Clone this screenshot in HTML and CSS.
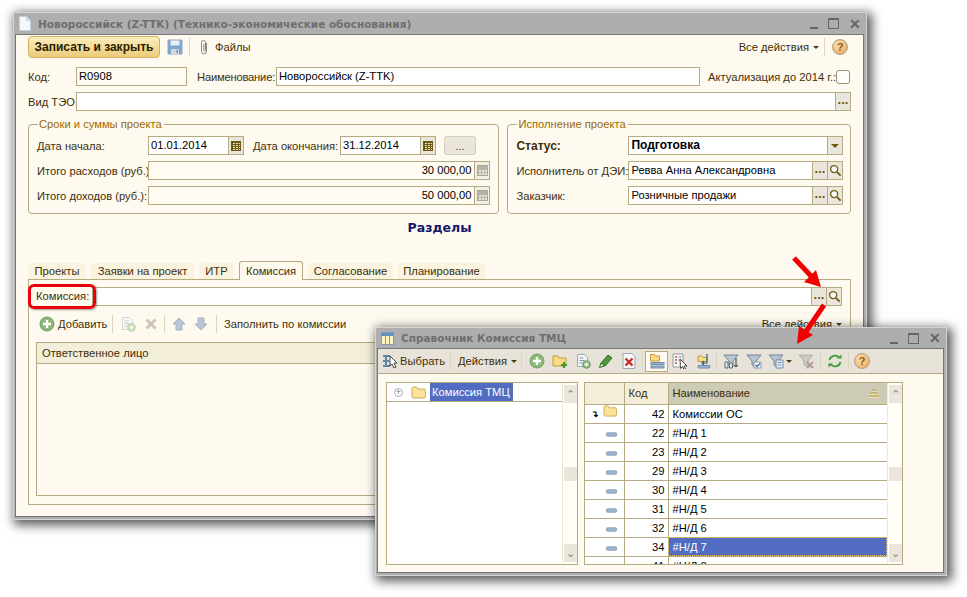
FILE: index.html
```html
<!DOCTYPE html>
<html lang="ru">
    <head>
        <meta charset="UTF-8" />
        <title>Новороссийск (Z-TTK)</title>
        <link rel="stylesheet" href="styles.css">
    </head>
    <body>
        <svg class="defs" width="0" height="0">
            <symbol id="i-search" viewBox="0 0 14 14">
                <circle cx="5.5" cy="5.5" r="3.8" fill="#fff" stroke="#75601c" stroke-width="1.5"/>
                <path d="M8.5 8.5l4 4" stroke="#75601c" stroke-width="2.2"/>
            </symbol>
            <symbol id="i-add" viewBox="0 0 16 16">
                <circle cx="8" cy="8" r="7" fill="#8cb878" stroke="#6f9a62"/>
                <path d="M8 4v8M4 8h8" stroke="#fff" stroke-width="2.4"/>
            </symbol>
            <symbol id="i-folder" viewBox="0 0 15 13">
                <path d="M1 2.5q0-1.500 1.500-1.500h3l1.500 2h6q1.500 0 1.500 1.500v6q0 1.500-1.500 1.500h-10.500q-1.500 0-1.500-1.500z" fill="#fbe49a" stroke="#c9a95c"/>
            </symbol>
            <symbol id="i-page-add" viewBox="0 0 16 16">
                <path d="M2.500 1.500h7l3 3v9h-10z" fill="#f4f6f8" stroke="#9fa9b5"/>
                <path d="M4.500 5h4M4.500 7.500h5M4.500 10h3" stroke="#7c97b8"/>
                <circle cx="11.500" cy="11.500" r="3.800" fill="#8cb878" stroke="#6f9a62"/>
                <path d="M11.500 9.500v4M9.500 11.500h4" stroke="#fff" stroke-width="1.400"/>
            </symbol>
            <symbol id="i-filter" viewBox="0 0 16 16">
                <path d="M1 2h14l-5 6v6l-4-2v-4z" fill="#b9c6d2" stroke="#74858f"/>
            </symbol>
            <symbol id="i-dash" viewBox="0 0 16 6">
                <rect x="0.500" y="0.500" width="15" height="5" rx="1.500" fill="#9db8d2" stroke="#6e8ba8"/>
            </symbol>
        </svg>

        <div class="window main-window">
            <div class="titlebar">
                <svg class="title-icon" width="12" height="15" viewBox="0 0 12 15"><path d="M.5.500h7l4 4v10h-11z" fill="#f4f8fc" stroke="#c4d2e0"/><path d="M7.500.500v4h4" fill="#d5e0ec" stroke="#c4d2e0"/></svg>
                <span class="title-text">Новороссийск (Z-TTK) (Технико-экономические обоснования)</span>
                <span class="controls"><i class="ctl-min"></i><i class="ctl-max"></i><i class="ctl-close">✕</i></span>
            </div>
            <div class="window-body main-body">
                <div class="toolbar main-toolbar">
                    <button class="primary">Записать и закрыть</button>
                    <svg class="save-icon" width="16" height="16" viewBox="0 0 16 16"><path d="M1 1h14v14h-14z" fill="#7ea6cb" stroke="#8fa9c2"/><path d="M3.500 1.500h9v5h-9z" fill="#e6eef6"/><path d="M4 10h8v5h-8z" fill="#cfd9e4"/><path d="M9.500 11h1.500v3h-1.500z" fill="#5f8fbd"/></svg>
                    <span class="sep save-sep"></span>
                    <svg class="clip-icon" width="8" height="16" viewBox="0 0 8 16"><path d="M6.500 4v8.500a2.500 2.500 0 0 1-5 0v-9a2 2 0 0 1 4 0v8a.8.8 0 0 1-1.600 0v-7" fill="none" stroke="#8b8b82" stroke-width="1"/></svg>
                    <span class="files">Файлы</span>
                    <span class="actions">Все действия<i class="caret"></i></span>
                    <span class="sep"></span>
                    <span class="help">?</span>
                </div>

                <div class="row row-first">
                    <label class="lbl w-48">Код:</label>
                    <div class="field readonly w-111"><span class="val">R0908</span></div>
                    <label class="lbl name-lbl">Наименование:</label>
                    <div class="field name-field"><span class="val">Новороссийск (Z-TTK)</span></div>
                    <label class="lbl actual-lbl">Актуализация до 2014 г.:</label>
                    <span class="check"></span>
                </div>
                <div class="row row-kind">
                    <label class="lbl w-48">Вид ТЭО:</label>
                    <div class="field grow"><span class="val"></span><b class="btn dots">...</b></div>
                </div>

                <div class="groups">
                    <fieldset class="group group-left">
                        <legend>Сроки и суммы проекта</legend>
                        <div class="group-row">
                            <label class="lbl w-111">Дата начала:</label>
                            <div class="field w-96"><span class="val">01.01.2014</span><b class="btn cal"><i></i></b></div>
                            <label class="lbl end-lbl">Дата окончания:</label>
                            <div class="field w-96"><span class="val">31.12.2014</span><b class="btn cal"><i></i></b></div>
                            <button class="plain">...</button>
                        </div>
                        <div class="group-row">
                            <label class="lbl w-111">Итого расходов (руб.):</label>
                            <div class="field readonly grow"><span class="val right">30 000,00</span><b class="btn calc"><i></i></b></div>
                        </div>
                        <div class="group-row">
                            <label class="lbl w-111">Итого доходов (руб.):</label>
                            <div class="field readonly grow"><span class="val right">50 000,00</span><b class="btn calc"><i></i></b></div>
                        </div>
                    </fieldset>
                    <fieldset class="group group-right">
                        <legend>Исполнение проекта</legend>
                        <div class="group-row">
                            <label class="lbl w-112 strong">Статус:</label>
                            <div class="field grow"><span class="val strong-val">Подготовка</span><b class="btn drop"><i class="caret big"></i></b></div>
                        </div>
                        <div class="group-row">
                            <label class="lbl w-112">Исполнитель от ДЭИ:</label>
                            <div class="field grow"><span class="val">Ревва Анна Александровна</span><b class="btn dots">...</b><b class="btn"><svg width="13" height="13"><use href="#i-search"/></svg></b></div>
                        </div>
                        <div class="group-row">
                            <label class="lbl w-112">Заказчик:</label>
                            <div class="field grow"><span class="val">Розничные продажи</span><b class="btn dots">...</b><b class="btn"><svg width="13" height="13"><use href="#i-search"/></svg></b></div>
                        </div>
                    </fieldset>
                </div>

                <div class="section-title">Разделы</div>

                <div class="tabs">
                    <span class="tab t-1">Проекты</span>
                    <span class="tab t-2">Заявки на проект</span>
                    <span class="tab t-3">ИТР</span>
                    <span class="tab t-4 active">Комиссия</span>
                    <span class="tab t-5">Согласование</span>
                    <span class="tab t-6">Планирование</span>
                </div>
                <div class="tab-panel">
                    <div class="panel-field">
                        <label class="lbl marked">Комиссия:</label>
                        <div class="field grow"><span class="val"></span><b class="btn dots">...</b><b class="btn"><svg width="13" height="13"><use href="#i-search"/></svg></b></div>
                    </div>
                    <div class="toolbar panel-toolbar">
                        <svg class="add-icon" width="16" height="16"><use href="#i-add"/></svg>
                        <span class="add-text">Добавить</span>
                        <span class="sep"></span>
                        <svg class="faded copy-icon" width="16" height="16"><use href="#i-page-add"/></svg>
                        <svg class="del-icon" width="12" height="12" viewBox="0 0 12 12"><path d="M1.500 1.500l9 9M10.500 1.500l-9 9" stroke="#d2c3b8" stroke-width="3"/></svg>
                        <span class="sep"></span>
                        <svg class="arrow-icon up" width="14" height="14" viewBox="0 0 14 14"><path d="M7 1l6 6h-3v6h-6v-6h-3z" fill="#b9c7d4" stroke="#a3b2c0"/></svg>
                        <svg class="arrow-icon down" width="14" height="14" viewBox="0 0 14 14"><path d="M7 13l6-6h-3v-6h-6v6h-3z" fill="#b9c7d4" stroke="#a3b2c0"/></svg>
                        <span class="sep"></span>
                        <span class="fill-text">Заполнить по комиссии</span>
                        <span class="actions">Все действия<i class="caret"></i></span>
                    </div>
                    <div class="plain-table">
                        <div class="plain-head">Ответственное лицо</div>
                    </div>
                </div>
            </div>
        </div>

        <div class="window ref-window">
            <div class="titlebar">
                <svg class="title-icon" width="13" height="13" viewBox="0 0 13 13"><path d="M.5.500h12v12h-12z" fill="#fdf3c0" stroke="#7f9cb8"/><path d="M.5 2.500h12" stroke="#5f8fbd" stroke-width="3"/><path d="M4.500 1v11M8.500 1v11" stroke="#7f9cb8"/></svg>
                <span class="title-text">Справочник Комиссия ТМЦ</span>
                <span class="controls"><i class="ctl-min"></i><i class="ctl-max"></i><i class="ctl-close">✕</i></span>
            </div>
            <div class="window-body">
                <div class="toolbar ref-toolbar">
                    <svg class="pick-icon" width="16" height="16" viewBox="0 0 16 16"><path d="M1 3h7M1 8h6M1 13h7M4 3v10" stroke="#5f86a8" stroke-width="2" fill="none"/><path d="M8 3l7 7h-3l2 4-2 1-2-4-2 2z" fill="#fff" stroke="#444"/></svg>
                    <span class="pick-text">Выбрать</span>
                    <span class="sep"></span>
                    <span class="acts-text">Действия<i class="caret"></i></span>
                    <span class="sep before-tools"></span>
                    <span class="tool"><svg width="16" height="16"><use href="#i-add"/></svg></span>
                    <span class="tool"><svg width="16" height="16" viewBox="0 0 16 16"><path d="M1 3h5l1 2h7v8h-13z" fill="#fbdc80" stroke="#c49a3c"/><path d="M12 9v6M9 12h6" stroke="#3c9a2c" stroke-width="2"/></svg></span>
                    <span class="tool"><svg width="16" height="16"><use href="#i-page-add"/></svg></span>
                    <span class="tool"><svg width="16" height="16" viewBox="0 0 16 16"><path d="M3 10l7-8 4 3-7 8z" fill="#4f9a3a" stroke="#2f7024"/><path d="M3 10l-1.500 4.500 5-1.500z" fill="#e8e3d8" stroke="#2f7024"/></svg></span>
                    <span class="tool"><svg width="14" height="16" viewBox="0 0 14 16"><path d="M1 .5h9l3 3v12h-12z" fill="#f4f6f8" stroke="#9fa9b5"/><path d="M3.500 5.500l7 7M10.500 5.500l-7 7" stroke="#c8281e" stroke-width="2.200"/></svg></span>
                    <span class="sep tight"></span>
                    <span class="tool toggled"><svg width="16" height="16" viewBox="0 0 16 16"><path d="M1.500 1.500h4l1 1.500h4v5h-9z" fill="#fbdc80" stroke="#c49a3c"/><rect x="2" y="9.500" width="13" height="2" fill="#9db8d2" stroke="#6e8ba8"/><rect x="2" y="13" width="13" height="2" fill="#9db8d2" stroke="#6e8ba8"/></svg></span>
                    <span class="tool"><svg width="16" height="16" viewBox="0 0 16 16"><path d="M1 1h10v13h-10z" fill="#f4f6f8" stroke="#8f9aa5"/><path d="M3 4h2M3 7h2M3 10h2" stroke="#c8503c" stroke-width="1.400"/><path d="M6.500 4h3M6.500 7h2" stroke="#5f86a8"/><path d="M8 6l7 7h-3l1.500 3-1.500.500-1.500-3-2 2z" fill="#fff" stroke="#444"/></svg></span>
                    <span class="tool"><svg width="16" height="16" viewBox="0 0 16 16"><path d="M3 3h4l1 1.500h4v4h-9z" fill="#fbdc80" stroke="#c49a3c"/><path d="M12 1v9h-5M9 8l-2 2 2 2" fill="none" stroke="#35607f" stroke-width="1.200"/><rect x="3" y="12.500" width="12" height="2.500" rx="1" fill="#9db8d2" stroke="#6e8ba8"/></svg></span>
                    <span class="sep tight"></span>
                    <span class="tool"><svg width="16" height="16" viewBox="0 0 16 16"><use href="#i-filter"/><path d="M2 9h3v6h-3zM6.500 10h3v5h-3z" fill="#dfe6ec" stroke="#56707f"/><path d="M13 5v9M11 12l2 2 2-2" fill="none" stroke="#333"/></svg></span>
                    <span class="tool"><svg width="16" height="16" viewBox="0 0 16 16"><use href="#i-filter"/><path d="M8 9h7v6h-7z" fill="#f4f6f8" stroke="#8f9aa5"/><path d="M9.500 12l1.500 1.500 3-3" fill="none" stroke="#3a78b8" stroke-width="1.400"/></svg></span>
                    <span class="tool filter-drop"><svg width="16" height="16" viewBox="0 0 16 16"><use href="#i-filter"/><path d="M8 7h7v8h-7z" fill="#e8eef4" stroke="#6e8ba8"/><path d="M9.500 9.500h4M9.500 12h4" stroke="#6e8ba8"/></svg><i class="caret"></i></span>
                    <span class="tool faded-x"><svg width="16" height="16" viewBox="0 0 16 16"><path d="M1 2h14l-5 6v6l-4-2v-4z" fill="#c8c8c4" stroke="#b0b0ac"/><path d="M9 9l6 6M15 9l-6 6" stroke="#b59a94" stroke-width="2"/></svg></span>
                    <span class="sep tight"></span>
                    <span class="tool"><svg width="16" height="16" viewBox="0 0 16 16"><path d="M2.500 7a5.500 5.500 0 0 1 9.500-2.500M13.500 9a5.500 5.500 0 0 1-9.500 2.500" fill="none" stroke="#3f9a3a" stroke-width="1.800"/><path d="M10 5.500h4.500v-4zM6 10.500h-4.500v4z" fill="#3f9a3a"/></svg></span>
                    <span class="sep tight"></span>
                    <span class="help help-ref">?</span>
                </div>
                <div class="ref-content">
                    <div class="tree">
                        <div class="tree-main">
                            <div class="tree-row">
                                <span class="expander">+</span>
                                <svg class="tree-folder" width="15" height="13"><use href="#i-folder"/></svg>
                                <span class="tree-sel">Комиссия ТМЦ</span>
                            </div>
                        </div>
                        <div class="scrollbar"><i class="sb-btn">⌃</i><i class="sb-thumb"></i><i class="sb-btn">⌄</i></div>
                    </div>
                    <div class="list">
                        <div class="list-main">
                            <table>
                                <thead>
                                    <tr><th class="c-icon"></th><th class="c-code">Код</th><th class="c-name">Наименование<i class="sort"></i></th></tr>
                                </thead>
                                <tbody>
                                    <tr><td class="c-icon"><span class="drill">↴</span><svg width="14" height="12"><use href="#i-folder"/></svg></td><td class="c-code">42</td><td>Комиссии ОС</td></tr>
                                    <tr><td class="c-icon"><svg width="11" height="5"><use href="#i-dash"/></svg></td><td class="c-code">22</td><td>#Н/Д 1</td></tr>
                                    <tr><td class="c-icon"><svg width="11" height="5"><use href="#i-dash"/></svg></td><td class="c-code">23</td><td>#Н/Д 2</td></tr>
                                    <tr><td class="c-icon"><svg width="11" height="5"><use href="#i-dash"/></svg></td><td class="c-code">29</td><td>#Н/Д 3</td></tr>
                                    <tr><td class="c-icon"><svg width="11" height="5"><use href="#i-dash"/></svg></td><td class="c-code">30</td><td>#Н/Д 4</td></tr>
                                    <tr><td class="c-icon"><svg width="11" height="5"><use href="#i-dash"/></svg></td><td class="c-code">31</td><td>#Н/Д 5</td></tr>
                                    <tr><td class="c-icon"><svg width="11" height="5"><use href="#i-dash"/></svg></td><td class="c-code">32</td><td>#Н/Д 6</td></tr>
                                    <tr><td class="c-icon"><svg width="11" height="5"><use href="#i-dash"/></svg></td><td class="c-code">34</td><td class="selected">#Н/Д 7</td></tr>
                                    <tr><td class="c-icon"><svg width="11" height="5"><use href="#i-dash"/></svg></td><td class="c-code">41</td><td>#Н/Д 8</td></tr>
                                </tbody>
                            </table>
                        </div>
                        <div class="scrollbar"><i class="sb-btn">⌃</i><i class="sb-thumb"></i><i class="sb-btn">⌄</i></div>
                    </div>
                </div>
            </div>
        </div>

        <svg class="red-arrows" width="967" height="597" viewBox="0 0 967 597">
            <path d="M794 258l18 19" stroke="#f00000" stroke-width="5"/>
            <path d="M821 287l-17-5 12-12z" fill="#f00000"/>
            <path d="M824 305l-19 28" stroke="#f00000" stroke-width="5"/>
            <path d="M797 344l2-18 14 9z" fill="#f00000"/>
        </svg>
    </body>
</html>
```

FILE: styles.css
```css
* {
    box-sizing: border-box;
}
body {
    margin: 0;
    width: 967px;
    height: 597px;
    position: relative;
    overflow: hidden;
    background: white;
    color: #3d2f08;
    font-family: "Liberation Sans", Arial, sans-serif;
    font-size: 11.2px;
}
i {
    font-style: normal;
}
.defs {
    position: absolute;
}

/* windows */
.window {
    position: absolute;
    background: #aeaeae;
    border: 1px solid #d4d4d4;
    box-shadow: 3px 3px 10px 2px rgba(0, 0, 0, 0.65);
    display: flex;
    flex-direction: column;
}
.main-window {
    left: 13px;
    top: 12px;
    width: 854px;
    height: 508px;
}
.ref-window {
    left: 375px;
    top: 327px;
    width: 572px;
    height: 249px;
}
.titlebar {
    height: 21px;
    flex: none;
    display: flex;
    align-items: center;
    padding-left: 5px;
    color: #6e6e6e;
}
.ref-window .titlebar {
    height: 20px;
}
.title-text {
    margin-left: 7px;
    font-family: "DejaVu Sans", sans-serif;
    font-weight: bold;
    font-size: 10.5px;
}
.controls {
    margin-left: auto;
    display: flex;
    align-items: center;
    gap: 10px;
    padding-right: 6px;
}
.ctl-min {
    width: 8px;
    height: 2px;
    margin-top: 9px;
    background: #666;
}
.ctl-max {
    width: 11px;
    height: 11px;
    border: 1px solid #666;
    border-top-width: 2px;
}
.ctl-close {
    width: 11px;
    line-height: 12px;
    font-size: 14px;
    font-weight: bold;
    color: #666;
    text-align: center;
}
.window-body {
    flex: 1;
    margin: 0 2px 2px 1px;
    background: #fffaf0;
    border: 1px solid #777;
    min-height: 0;
}
.main-body {
    padding: 0 12px;
}

/* toolbars */
.toolbar {
    display: flex;
    align-items: center;
}
.main-toolbar {
    height: 22px;
    margin-top: 1px;
}
button.primary {
    width: 132px;
    height: 22px;
    padding: 0;
    border: 1px solid #d6b060;
    border-radius: 4px;
    background: linear-gradient(#fdeebc, #eccb7a);
    color: #2c2000;
    font-family: "Liberation Sans", sans-serif;
    font-weight: bold;
    font-size: 12px;
}
.save-icon {
    margin-left: 7px;
}
.sep {
    width: 1px;
    height: 18px;
    background: #dcd6c0;
    flex: none;
}
.save-sep {
    margin-left: 6px;
}
.clip-icon {
    margin-left: 10px;
}
.files {
    margin-left: 7px;
}
.actions {
    margin-left: auto;
    margin-right: 5px;
    white-space: nowrap;
}
.caret {
    display: inline-block;
    width: 0;
    height: 0;
    margin-left: 4px;
    vertical-align: 2px;
    border: 3px solid transparent;
    border-top: 3px solid #4a3c10;
    border-bottom: 0;
}
.help {
    width: 16px;
    height: 16px;
    margin: 0 3px 0 7px;
    border-radius: 50%;
    border: 1px solid #a8a08c;
    background: radial-gradient(circle at 40% 35%, #fde2b4, #eda04a);
    color: #8a5a10;
    font-weight: bold;
    font-size: 11px;
    line-height: 14px;
    text-align: center;
    flex: none;
}

/* form rows */
.row {
    display: flex;
    align-items: center;
    height: 19px;
}
.row-first {
    margin-top: 9px;
}
.row-kind {
    margin-top: 6px;
}
.lbl {
    flex: none;
    white-space: nowrap;
}
.w-48 {
    width: 48px;
}
.w-111 {
    width: 111px;
}
.w-112 {
    width: 112px;
}
.w-96 {
    width: 96px;
}
.grow {
    flex: 1;
}
.field {
    height: 19px;
    border: 1px solid #b5aa80;
    background: white;
    display: flex;
    color: black;
    flex-shrink: 0;
}
.field.grow {
    flex: 1;
    min-width: 0;
}
.field.readonly {
    background: #fffcf4;
}
.val {
    flex: 1;
    padding-left: 2px;
    line-height: 17px;
    white-space: nowrap;
}
.val.right {
    text-align: right;
    padding-right: 3px;
}
.strong-val {
    font-weight: bold;
    font-size: 12px;
}
.name-lbl {
    margin-left: 10px;
    width: 79px;
    letter-spacing: -0.2px;
}
.name-field {
    width: 424px;
}
.actual-lbl {
    margin-left: 8px;
    width: 128px;
}
.check {
    width: 14px;
    height: 14px;
    border: 1px solid #9a9070;
    border-radius: 3px;
    background: white;
}
.btn {
    flex: none;
    width: 15px;
    border-left: 1px solid #b5aa80;
    background: #ebe6dc;
    display: flex;
    align-items: center;
    justify-content: center;
    font-weight: bold;
    color: #6b5a14;
}
.dots {
    font-size: 13px;
    line-height: 20px;
    align-items: flex-end;
    overflow: hidden;
}
.cal i {
    width: 10px;
    height: 10px;
    border: 1px solid #6b5a14;
    background:
        repeating-linear-gradient(90deg, #6b5a14 0 1px, transparent 1px 3px),
        repeating-linear-gradient(#6b5a14 0 1px, #f3e6b0 1px 2px);
}
.calc {
    background: #f3efe2;
}
.calc i {
    width: 11px;
    height: 11px;
    border: 1px solid #a8a898;
    background:
        linear-gradient(#b5b5a8 0 3px, transparent 3px),
        repeating-linear-gradient(90deg, #b5b5a8 0 1px, transparent 1px 3px),
        repeating-linear-gradient(#b5b5a8 0 1px, #e8e8dc 1px 3px);
}
.drop .big {
    margin-left: 0;
    vertical-align: 0;
    border-width: 4px 4px 0;
    border-top-color: #6b5a14;
}

/* groups */
.groups {
    display: flex;
    gap: 8px;
    margin-top: 6px;
}
.group {
    margin: 0;
    min-width: 0;
    height: 97px;
    padding: 5px 7px 8px 8px;
    border: 1px solid #b5aa80;
    border-radius: 4px;
    display: flex;
    flex-direction: column;
    gap: 6px;
}
.group legend {
    margin-left: 1px;
    padding: 0 2px 0 1px;
    line-height: 14px;
    color: #9a6a00;
}
.group-left {
    width: 472px;
    padding-right: 8px;
}
.group-right {
    width: 344px;
}
.group-row {
    display: flex;
    align-items: center;
    height: 19px;
}
.end-lbl {
    margin-left: 9px;
    width: 87px;
}
button.plain {
    margin-left: 8px;
    width: 32px;
    height: 19px;
    padding: 0;
    border: 1px solid #d4cdb8;
    border-radius: 3px;
    background: #ebe6dc;
    color: #4a3c10;
    font-family: "Liberation Sans", sans-serif;
    font-size: 11px;
}
.strong {
    font-weight: bold;
    font-size: 12px;
}
.section-title {
    margin-top: 6px;
    height: 16px;
    text-align: center;
    color: #14186b;
    font-family: "DejaVu Sans", sans-serif;
    font-weight: bold;
    font-size: 12.5px;
    line-height: 16px;
}

/* tabs */
.tabs {
    display: flex;
    align-items: flex-end;
    height: 43px;
}
.tab {
    height: 16px;
    margin-right: 5px;
    padding-top: 1px;
    border-radius: 3px 3px 0 0;
    background: #f9f3e0;
    text-align: center;
    line-height: 15px;
    flex: none;
}
.tab.active {
    position: relative;
    height: 19px;
    margin-bottom: -1px;
    border: 1px solid #b5aa80;
    border-bottom: 0;
    background: #fffaf0;
    line-height: 16px;
}
.t-1 {
    width: 58px;
}
.t-2 {
    width: 103px;
}
.t-3 {
    width: 35px;
}
.t-4 {
    width: 64px;
}
.t-5 {
    width: 85px;
}
.t-6 {
    width: 87px;
}
.tab-panel {
    height: 226px;
    border: 1px solid #b5aa80;
    padding: 7px 8px 0 7px;
}
.panel-field {
    display: flex;
    align-items: center;
}
.marked {
    position: relative;
    width: 56px;
    height: 19px;
    line-height: 19px;
}
.marked::after {
    content: "";
    position: absolute;
    left: -8px;
    right: -4px;
    top: -3px;
    bottom: -3px;
    border: 3px solid #e8000c;
    border-radius: 6px;
    box-shadow: 1px 1px 2px rgba(0, 0, 0, 0.4);
}
.panel-toolbar {
    height: 18px;
    margin-top: 9px;
}
.add-icon {
    margin-left: 3px;
}
.add-text {
    margin-left: 3px;
    width: 54px;
}
.copy-icon {
    margin-left: 7px;
}
.faded {
    opacity: 0.45;
}
.del-icon {
    margin: 0 7px 0 9px;
}
.arrow-icon.up {
    margin-left: 7px;
}
.arrow-icon.down {
    margin: 0 8px;
}
.fill-text {
    margin-left: 7px;
}
.panel-toolbar .actions {
    margin-right: 0;
}
.plain-table {
    height: 154px;
    margin-top: 9px;
    border: 1px solid #b5aa80;
}
.plain-head {
    height: 21px;
    padding-left: 5px;
    border-bottom: 1px solid #b5aa80;
    background: #f3eeda;
    line-height: 20px;
}

/* catalog window */
.ref-toolbar {
    height: 25px;
    padding-left: 4px;
    background: #e8e3d8;
    border-bottom: 1px solid #b5aa80;
}
.pick-text {
    margin-left: 2px;
    width: 50px;
}
.acts-text {
    width: 70px;
    padding-left: 7px;
    white-space: nowrap;
}
.before-tools {
    margin-right: 3px;
}
.tool {
    width: 23px;
    height: 21px;
    display: flex;
    align-items: center;
    justify-content: center;
    flex: none;
}
.sep.tight {
    margin: 0 2px;
}
.toggled {
    border: 1px solid #b5aa80;
    background: #fffaf0;
}
.filter-drop {
    width: 29px;
    justify-content: flex-start;
    padding-left: 3px;
}
.filter-drop .caret {
    margin-left: 2px;
}
.faded-x {
    width: 24px;
}
.help-ref {
    margin-left: 3px;
}
.ref-content {
    display: flex;
    gap: 6px;
    padding: 8px 0 0 8px;
}
.tree,
.list {
    height: 183px;
    border: 1px solid #b5aa80;
    background: white;
    display: flex;
    overflow: hidden;
}
.tree {
    width: 192px;
}
.list {
    width: 319px;
    background: #fffaf0;
}
.tree-main,
.list-main {
    flex: 1;
    min-width: 0;
    overflow: hidden;
    background: white;
}
.tree-row {
    height: 19px;
    display: flex;
    align-items: center;
    border-bottom: 1px solid #b5aa80;
}
.expander {
    width: 9px;
    height: 9px;
    margin-left: 7px;
    border: 1px solid #aaa;
    border-radius: 50%;
    color: #777;
    font-size: 9px;
    line-height: 7px;
    text-align: center;
}
.tree-folder {
    margin-left: 8px;
}
.tree-sel {
    margin-left: 4px;
    width: 83px;
    height: 18px;
    padding-left: 2px;
    background: #516cc0;
    color: white;
    line-height: 18px;
}
.scrollbar {
    width: 15px;
    flex: none;
    background: #fffdf5;
    display: flex;
    flex-direction: column;
    justify-content: space-between;
    align-items: center;
    padding: 2px 0;
    border-left: 1px solid #efe9d4;
    position: relative;
}
.sb-btn {
    width: 13px;
    height: 18px;
    background: #ebe6dc;
    color: #8a8468;
    font-size: 11px;
    line-height: 18px;
    text-align: center;
}
.sb-thumb {
    width: 13px;
    height: 14px;
    background: #ebe6dc;
}
table {
    width: 302px;
    border-collapse: collapse;
    table-layout: fixed;
    color: black;
}
th,
td {
    height: 19px;
    padding: 0 0 0 4px;
    border: 1px solid #b5aa80;
    border-top: 0;
    font-weight: normal;
    text-align: left;
    line-height: 16px;
    white-space: nowrap;
}
th {
    height: 21px;
    background: #f3eeda;
    color: #3d2f08;
}
th:first-child,
td:first-child {
    border-left: 0;
}
th:last-child,
td:last-child {
    border-right: 0;
}
.c-icon {
    width: 39px;
    padding: 0 7px 0 0;
    text-align: right;
}
th.c-code {
    width: 44px;
    text-align: left;
}
td.c-code {
    text-align: right;
    padding-right: 3px;
}
th.c-name {
    position: relative;
    background: #cdcab5;
}
.sort {
    position: absolute;
    right: 7px;
    top: 6px;
    width: 12px;
    height: 9px;
    background: repeating-linear-gradient(#c4b67a 0 2px, #e6dfb8 2px 3px);
    clip-path: polygon(35% 0, 65% 0, 100% 100%, 0 100%);
}
.drill {
    margin-right: 4px;
    font-size: 9px;
    font-weight: bold;
}
.selected {
    background: #516cc0;
    color: white;
    outline: 1px dotted #e0c060;
    outline-offset: -1px;
}

/* hand-drawn pointers on top of the screenshot */
.red-arrows {
    position: absolute;
    left: 0;
    top: 0;
    pointer-events: none;
}
```
